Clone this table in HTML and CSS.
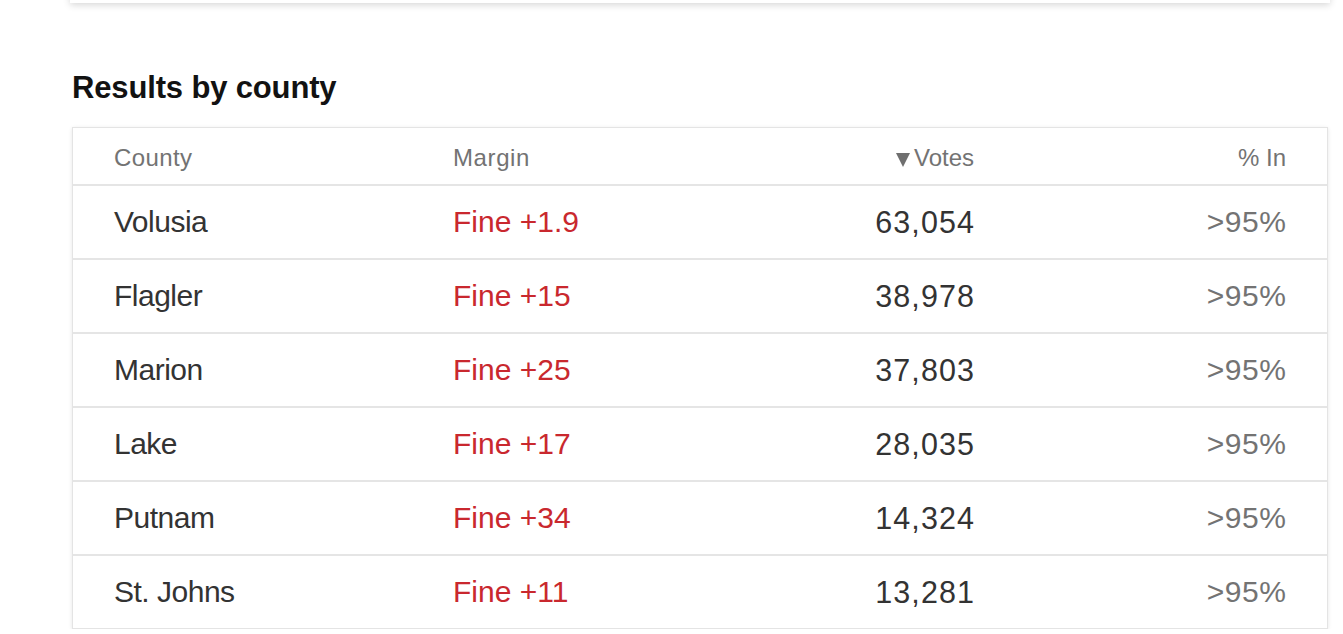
FILE: index.html
```html
<!DOCTYPE html>
<html lang="en">
<head>
<meta charset="utf-8">
<title>Results by county</title>
<link rel="stylesheet" href="styles.css">
</head>
<body>
<div class="page">
  <div class="prev-card"></div>
  <h2 class="title">Results by county</h2>
  <div class="table">
    <div class="row head">
      <div class="c-county">County</div>
      <div class="c-margin">Margin</div>
      <div class="c-votes"><span class="tri"></span>Votes</div>
      <div class="c-pct">% In</div>
    </div>
    <div class="row">
      <div class="c-county">Volusia</div>
      <div class="c-margin red">Fine +1.9</div>
      <div class="c-votes">63,054</div>
      <div class="c-pct">&gt;95%</div>
    </div>
    <div class="row">
      <div class="c-county">Flagler</div>
      <div class="c-margin red">Fine +15</div>
      <div class="c-votes">38,978</div>
      <div class="c-pct">&gt;95%</div>
    </div>
    <div class="row">
      <div class="c-county">Marion</div>
      <div class="c-margin red">Fine +25</div>
      <div class="c-votes">37,803</div>
      <div class="c-pct">&gt;95%</div>
    </div>
    <div class="row">
      <div class="c-county">Lake</div>
      <div class="c-margin red">Fine +17</div>
      <div class="c-votes">28,035</div>
      <div class="c-pct">&gt;95%</div>
    </div>
    <div class="row">
      <div class="c-county">Putnam</div>
      <div class="c-margin red">Fine +34</div>
      <div class="c-votes">14,324</div>
      <div class="c-pct">&gt;95%</div>
    </div>
    <div class="row">
      <div class="c-county">St. Johns</div>
      <div class="c-margin red">Fine +11</div>
      <div class="c-votes">13,281</div>
      <div class="c-pct">&gt;95%</div>
    </div>
  </div>
</div>
</body>
</html>
```

FILE: styles.css
```css
* { box-sizing: border-box; }
html, body { margin: 0; padding: 0; background: #ffffff; }
body { font-family: "Liberation Sans", Arial, sans-serif; color: #333333; }
.page { width: 1256px; margin-left: 72px; }
.prev-card {
  height: 40px;
  margin-top: -37px;
  margin-left: -2px;
  margin-right: -2px;
  background: #ffffff;
  box-shadow: 0 2px 7px rgba(0, 0, 0, 0.16);
}
.title {
  margin: 0;
  margin-top: 66px;
  height: 38px;
  line-height: 38px;
  font-size: 31px;
  font-weight: 700;
  color: #121212;
  letter-spacing: -0.15px;
}
.table {
  margin-top: 20px;
  border: 1px solid #e4e4e4;
  box-shadow: 0 1px 4px rgba(0, 0, 0, 0.10);
  background: #ffffff;
}
.row {
  display: grid;
  grid-template-columns: 339px 260px 261px 312px;
  align-items: center;
  height: 74px;
  padding: 0 41px;
  border-top: 2px solid #e5e5e5;
  font-size: 30px;
  color: #333333;
}
.row .c-county { letter-spacing: -0.5px; }
.row .c-votes { letter-spacing: 1.1px; margin-right: -1.1px; font-size: 30.5px; }
.row .c-pct { letter-spacing: 0.6px; margin-right: -0.6px; }
.row.head {
  height: 56px;
  border-top: none;
  font-size: 24px;
  color: #737373;
  padding-top: 4px;
}
.row.head .c-county { letter-spacing: 0.4px; }
.row.head .c-margin { letter-spacing: 0.6px; }
.row.head .c-votes, .row.head .c-pct { letter-spacing: 0; margin-right: 0; font-size: 24px; }
.c-votes, .c-pct { text-align: right; }
.c-pct { color: #737373; }
.red { color: #c9282e; }
.tri {
  display: inline-block;
  width: 0;
  height: 0;
  border-left: 7px solid transparent;
  border-right: 7px solid transparent;
  border-top: 14px solid #6f6f6f;
  margin-right: 4px;
  vertical-align: -1px;
}
```
